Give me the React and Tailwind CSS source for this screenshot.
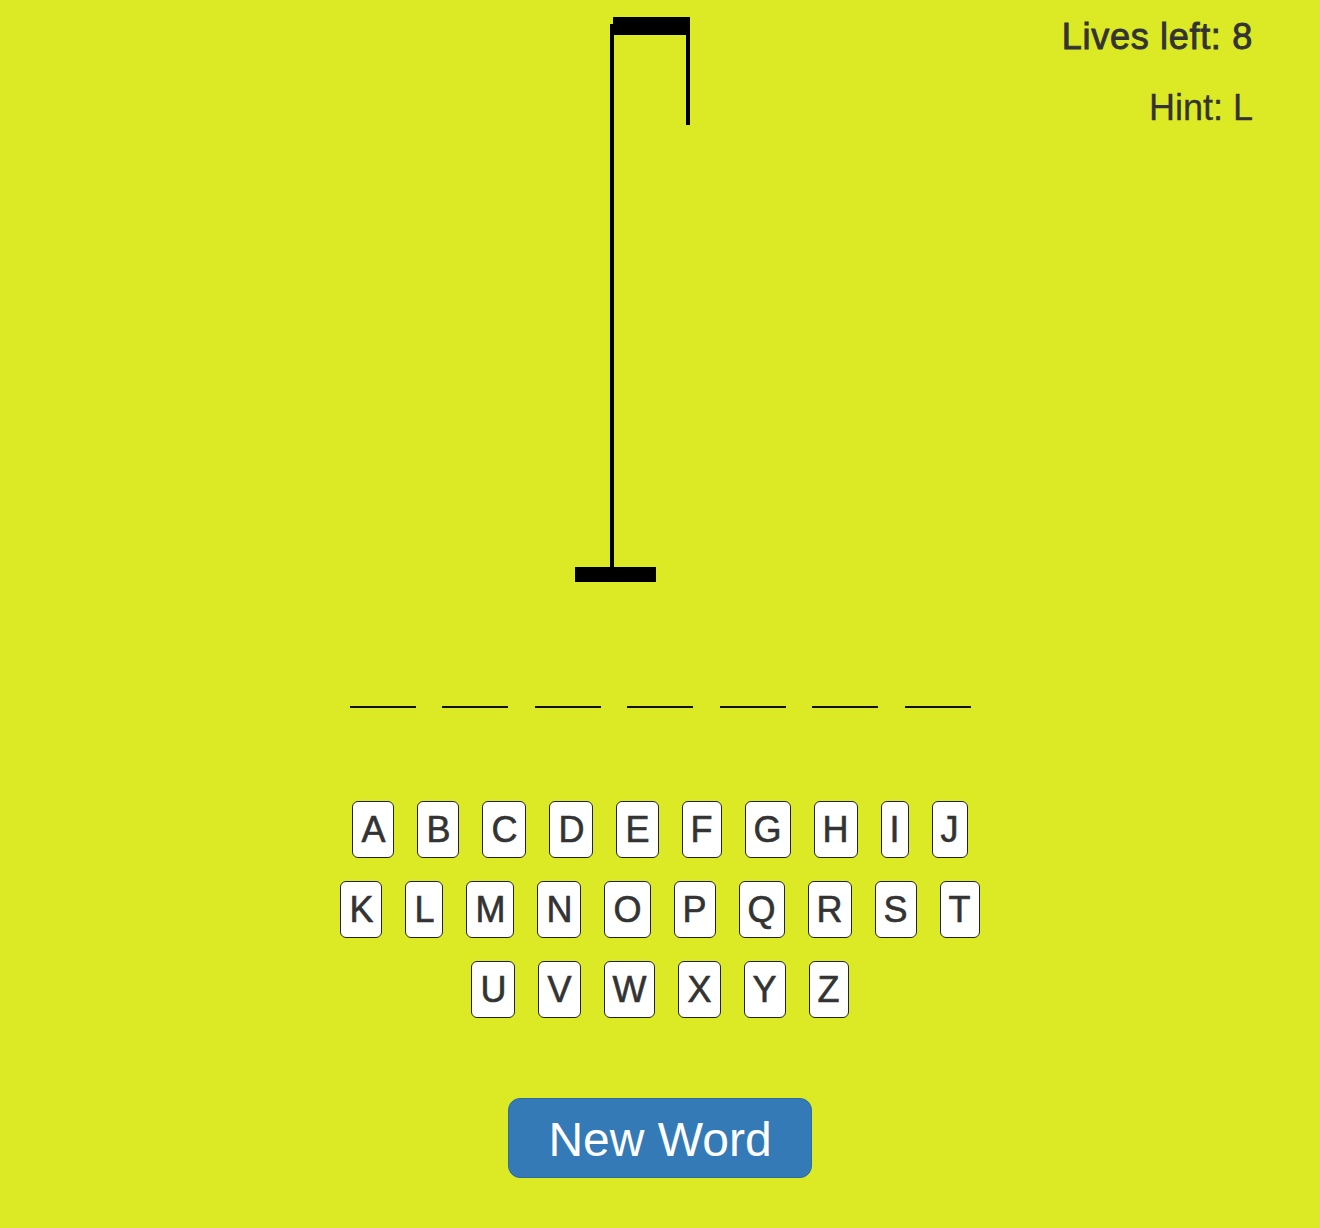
import React from 'react';

const ROWS = [
  ['A', 'B', 'C', 'D', 'E', 'F', 'G', 'H', 'I', 'J'],
  ['K', 'L', 'M', 'N', 'O', 'P', 'Q', 'R', 'S', 'T'],
  ['U', 'V', 'W', 'X', 'Y', 'Z'],
];

function Gallows() {
  return (
    <svg width="200" height="600" viewBox="0 0 200 600">
      {/* top beam */}
      <rect x="53" y="17" width="76" height="18" fill="#000" />
      {/* post */}
      <rect x="50" y="24" width="4" height="548" fill="#000" />
      {/* rope */}
      <rect x="126" y="17" width="4" height="108" fill="#000" />
      {/* base */}
      <rect x="15" y="567" width="81" height="15" fill="#000" />
    </svg>
  );
}

export default function App() {
  const blanks = Array.from({ length: 7 });

  return (
    <div
      className="min-h-screen bg-[#dbea25] text-[#333]"
      style={{ fontFamily: '"Liberation Sans", Arial, sans-serif' }}
    >
      {/* Top: gallows + stats */}
      <div className="grid grid-cols-[1fr_auto_1fr]">
        <div />
        <Gallows />
        <div className="pr-[67px] text-right">
          <div className="mt-[19px] text-[36px] leading-[36px] tracking-[0.7px] [-webkit-text-stroke:0.9px_#333]">
            Lives left: 8
          </div>
          <div className="mt-[35px] text-[36px] leading-[36px] [-webkit-text-stroke:0.3px_#333]">Hint: L</div>
        </div>
      </div>

      {/* Word blanks */}
      <div className="mt-[106px] flex justify-center gap-[26.5px]">
        {blanks.map((_, i) => (
          <div key={i} className="h-[2px] w-[66px] bg-[#111]" />
        ))}
      </div>

      {/* Letters */}
      <div className="mt-[93px] flex flex-col items-center gap-[23px]">
        {ROWS.map((row, i) => (
          <div key={i} className="flex gap-[23px]">
            {row.map((l) => (
              <button
                key={l}
                className="rounded-md border border-[#222] bg-white px-2 py-2 text-[36px] leading-[39px] text-[#333] [-webkit-text-stroke:0.6px_#333]"
              >
                {l}
              </button>
            ))}
          </div>
        ))}
      </div>

      {/* New word */}
      <div className="mt-[80px] flex justify-center pb-[50px]">
        <button className="rounded-[12px] border border-[#2e6da4] bg-[#337ab7] px-[39px] pt-[14px] pb-[10px] text-[48px] leading-[54px] text-white">
          New Word
        </button>
      </div>
    </div>
  );
}
